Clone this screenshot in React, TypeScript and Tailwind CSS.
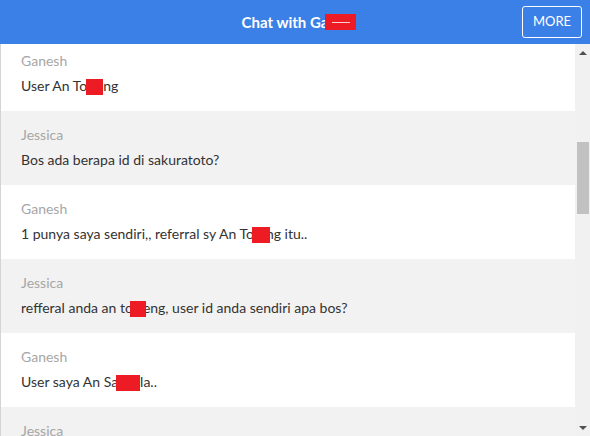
import React from 'react';

type Msg = { name: string; before: string; red?: { w: number; ml: number; mr: number }; after: string; gray: boolean };

const messages: Msg[] = [
  { name: 'Ganesh', before: 'User An To', red: { w: 17, ml: -1, mr: 0 }, after: 'ng', gray: false },
  { name: 'Jessica', before: 'Bos ada berapa id di sakuratoto?', after: '', gray: true },
  { name: 'Ganesh', before: '1 punya saya sendiri,, referral sy An To', red: { w: 18, ml: -2, mr: -4 }, after: 'ng itu..', gray: false },
  { name: 'Jessica', before: 'refferal anda an to', red: { w: 16, ml: -3, mr: -3 }, after: 'eng, user id anda sendiri apa bos?', gray: true },
  { name: 'Ganesh', before: 'User saya An Sa', red: { w: 24, ml: -2, mr: 0 }, after: 'la..', gray: false },
  { name: 'Jessica', before: 'Hmm', after: '', gray: true },
];

function Redact({ w, ml, mr }: { w: number; ml: number; mr: number }) {
  return (
    <span
      className="relative z-10 inline-block h-[16px] bg-[#ed1c24] align-middle"
      style={{ width: w, marginLeft: ml, marginRight: mr }}
    />
  );
}

export default function App() {
  return (
    <div className="w-[590px] h-[436px] flex flex-col overflow-hidden bg-white" style={{ fontFamily: 'Lato, "Open Sans", sans-serif' }}>
      <header className="h-[44px] shrink-0 bg-[#3b80e6] relative flex items-center justify-center">
        <div className="text-white text-[15px] font-bold flex items-center pl-[8px]">
          Chat with Ga
          <span className="inline-flex items-center justify-center w-[31px] h-[16px] bg-[#ed1c24] -ml-[3px]">
            <span className="w-[18px] h-px bg-white/80" />
          </span>
        </div>
        <button className="absolute right-[8px] top-[6px] w-[60px] h-[32px] border border-white rounded-[3px] text-white text-[13px]">
          MORE
        </button>
      </header>
      <div className="flex flex-1 min-h-0">
        <div className="flex-1 min-w-0 overflow-hidden border-l border-[#d4d4d4]">
          <div className="-mt-[7px]">
            {messages.map((m, i) => (
              <div key={i} className={`h-[74px] pl-[20px] pt-[15px] ${m.gray ? 'bg-[#f2f2f2]' : 'bg-white'}`}>
                <div className="text-[14px] leading-[18px] text-[#a6a6a6]">{m.name}</div>
                <div className="mt-[7px] text-[14px] leading-[18px] text-[#333]">
                  {m.before}
                  {m.red && <Redact w={m.red.w} ml={m.red.ml} mr={m.red.mr} />}
                  {m.after}
                </div>
              </div>
            ))}
          </div>
        </div>
        <div className="w-[15px] shrink-0 bg-[#f1f1f1] flex flex-col items-center">
          <div className="h-[17px] flex items-center justify-center">
            <span className="w-0 h-0 border-l-[4px] border-r-[4px] border-b-[4px] border-l-transparent border-r-transparent border-b-[#505050]" />
          </div>
          <div className="mt-[81px] w-[12px] h-[72px] bg-[#c1c1c1]" />
          <div className="flex-1" />
          <div className="h-[17px] flex items-center justify-center">
            <span className="w-0 h-0 border-l-[4px] border-r-[4px] border-t-[4px] border-l-transparent border-r-transparent border-t-[#505050]" />
          </div>
        </div>
      </div>
    </div>
  );
}
